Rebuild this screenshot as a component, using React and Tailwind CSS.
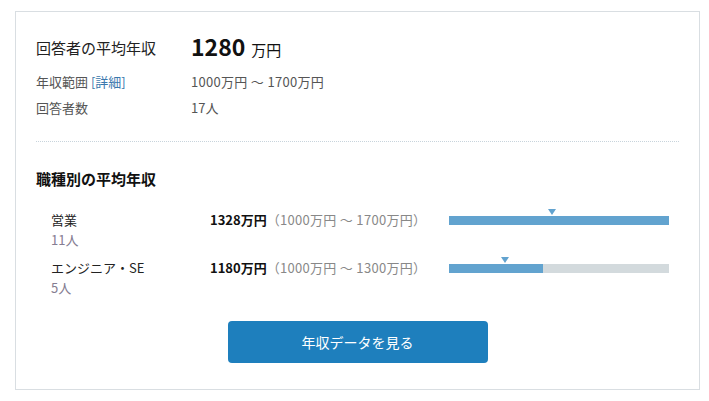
import React from "react";

const JOBS = [
  { name: "営業", count: "11人", avg: "1328万円", range: "（1000万円 ～ 1700万円）", fill: 220, marker: 103 },
  { name: "エンジニア・SE", count: "5人", avg: "1180万円", range: "（1000万円 ～ 1300万円）", fill: 94, marker: 56 },
];

function JobRow({ job }) {
  return (
    <div className="pl-[15px] pr-[10px]">
      <div className="flex h-[20px] items-center">
        <div className="w-[159px] text-[13px] text-[#222]">{job.name}</div>
        <div className="flex-1 text-[13px] whitespace-nowrap">
          <span className="font-bold text-[#111]">{job.avg}</span>
          <span className="text-[#888] tracking-[0.3px]">{job.range}</span>
        </div>
        <div className="relative w-[220px] h-[9px] bg-[#d3dadd]">
          <div className="h-full bg-[#62a3cf]" style={{ width: job.fill }} />
          <div
            className="absolute top-[-7px] w-0 h-0 border-l-[4px] border-r-[4px] border-t-[6px] border-l-transparent border-r-transparent border-t-[#62a3cf]"
            style={{ left: job.marker - 4 }}
          />
        </div>
      </div>
      <div className="h-[19px] flex items-center text-[13px] text-[#857d92]">{job.count}</div>
    </div>
  );
}

export default function App() {
  return (
    <div className="bg-white w-[709px] h-[401px] pt-[11px] pl-[15px]" style={{ fontFamily: '"Noto Sans CJK JP", "Noto Sans", sans-serif' }}>
      <div className="w-[685px] h-[379px] border border-[#d9dee2] px-[20px] pt-[21px]">
        {/* summary */}
        <div className="flex h-[30px] items-center">
          <div className="w-[155px] text-[15px] text-[#222]">回答者の平均年収</div>
          <div className="flex items-baseline text-[#111]">
            <span className="text-[23px] font-bold leading-none">1280</span>
            <span className="ml-[6px] text-[15px]">万円</span>
          </div>
        </div>
        <div className="mt-[6px] flex h-[26px] items-center text-[13px] text-[#555]">
          <div className="w-[155px]">
            年収範囲 <span className="text-[#3a78ad]">[詳細]</span>
          </div>
          <div className="tracking-[0.3px]">1000万円 ～ 1700万円</div>
        </div>
        <div className="flex h-[26px] items-center text-[13px] text-[#555]">
          <div className="w-[155px]">回答者数</div>
          <div>17人</div>
        </div>
        <div className="mt-[20px] border-t border-dotted border-[#c8d4dc]" />

        {/* by job */}
        <div className="mt-[25px] h-[24px] flex items-center text-[15px] font-bold text-[#111]">職種別の平均年収</div>
        <div className="mt-[19px] flex flex-col gap-[9px]">
          {JOBS.map((j) => (
            <JobRow key={j.name} job={j} />
          ))}
        </div>

        <div className="mt-[24px] flex justify-center">
          <button className="w-[260px] h-[42px] rounded-[4px] bg-[#1e7fbd] text-white text-[14px]">
            年収データを見る
          </button>
        </div>
      </div>
    </div>
  );
}
